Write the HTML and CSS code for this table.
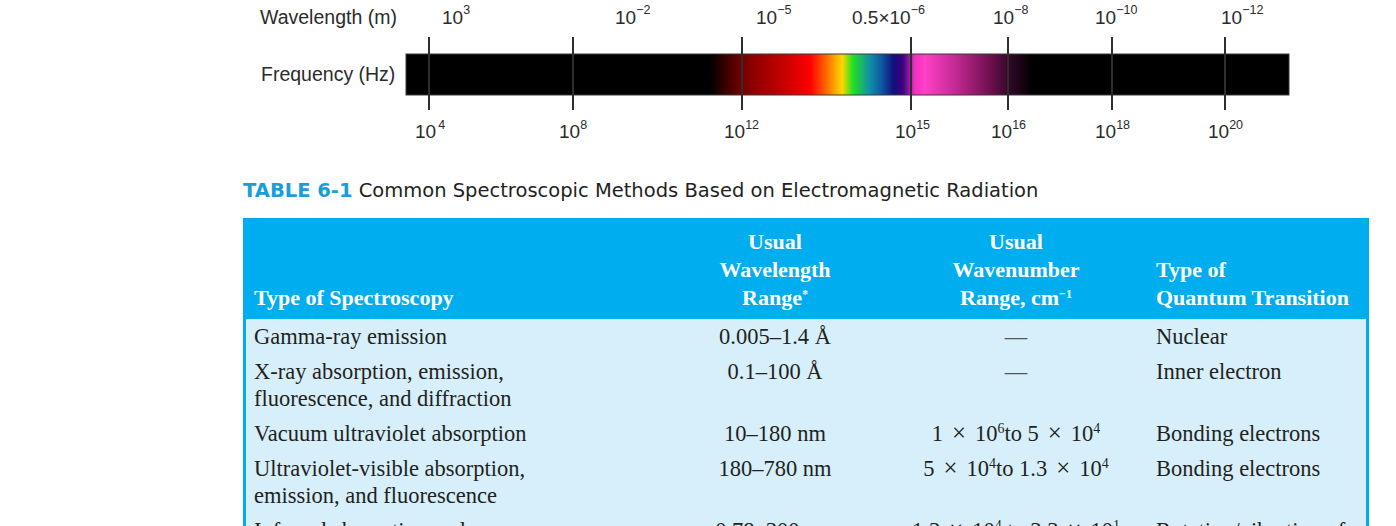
FILE: index.html
```html
<!DOCTYPE html>
<html lang="en">
<head>
<meta charset="utf-8">
<title>Common Spectroscopic Methods</title>
<link rel="stylesheet" href="styles.css">
</head>
<body>
<svg class="spectrum" width="1396" height="150" viewBox="0 0 1396 150">
  <defs>
    <linearGradient id="spec" x1="0" y1="0" x2="1" y2="0">
      <stop offset="0" stop-color="#000"/>
      <stop offset="0.344" stop-color="#000"/>
      <stop offset="0.382" stop-color="#7a0000"/>
      <stop offset="0.424" stop-color="#c00000"/>
      <stop offset="0.458" stop-color="#ff0000"/>
      <stop offset="0.472" stop-color="#ff5000"/>
      <stop offset="0.494" stop-color="#ffd800"/>
      <stop offset="0.506" stop-color="#22e022"/>
      <stop offset="0.525" stop-color="#1090a8"/>
      <stop offset="0.540" stop-color="#1050a0"/>
      <stop offset="0.552" stop-color="#10107a"/>
      <stop offset="0.563" stop-color="#400080"/>
      <stop offset="0.571" stop-color="#a020a0"/>
      <stop offset="0.576" stop-color="#f030c0"/>
      <stop offset="0.588" stop-color="#ff40c8"/>
      <stop offset="0.624" stop-color="#c02890"/>
      <stop offset="0.661" stop-color="#701050"/>
      <stop offset="0.684" stop-color="#300828"/>
      <stop offset="0.710" stop-color="#000"/>
      <stop offset="1" stop-color="#000"/>
    </linearGradient>
  </defs>
  <text class="axis-title" x="260" y="24">Wavelength (m)</text>
  <text class="axis-title" x="261" y="81">Frequency (Hz)</text>
  <rect x="406" y="54" width="883" height="41" fill="url(#spec)" stroke="#3a3a3a" stroke-width="1"/>
  <path class="tick" d="M429 37V110M573 37V110M742 37V110M911 37V110M1008 37V110M1112 37V110M1225 37V110"/>

  <text class="num" x="442" y="24">10<tspan class="sup" dy="-10">3</tspan></text>
  <text class="num" x="615" y="24">10<tspan class="sup" dy="-10">−2</tspan></text>
  <text class="num" x="756" y="24">10<tspan class="sup" dy="-10">−5</tspan></text>
  <text class="num" x="852" y="24">0.5×10<tspan class="sup" dy="-10">−6</tspan></text>
  <text class="num" x="993" y="24">10<tspan class="sup" dy="-10">−8</tspan></text>
  <text class="num" x="1095" y="24">10<tspan class="sup" dy="-10">−10</tspan></text>
  <text class="num" x="1221" y="24">10<tspan class="sup" dy="-10">−12</tspan></text>

  <text class="num" x="415" y="138">10<tspan class="sup" dy="-9" dx="2">4</tspan></text>
  <text class="num" x="559" y="138">10<tspan class="sup" dy="-9">8</tspan></text>
  <text class="num" x="724" y="138">10<tspan class="sup" dy="-9">12</tspan></text>
  <text class="num" x="895" y="138">10<tspan class="sup" dy="-9">15</tspan></text>
  <text class="num" x="991" y="138">10<tspan class="sup" dy="-9">16</tspan></text>
  <text class="num" x="1095" y="138">10<tspan class="sup" dy="-9">18</tspan></text>
  <text class="num" x="1208" y="138">10<tspan class="sup" dy="-9">20</tspan></text>
</svg>

<section class="table-block">
  <p class="caption"><span class="caption-label">TABLE 6-1</span> Common Spectroscopic Methods Based on Electromagnetic Radiation</p>
  <div class="table-frame">
    <table class="methods">
      <colgroup>
        <col class="col-type">
        <col class="col-wl">
        <col class="col-wn">
        <col class="col-qt">
      </colgroup>
      <thead>
        <tr>
          <th class="left first">Type of Spectroscopy</th>
          <th>Usual<br>Wavelength<br>Range<sup>*</sup></th>
          <th>Usual<br>Wavenumber<br>Range, cm<sup>−1</sup></th>
          <th class="left last">Type of<br>Quantum Transition</th>
        </tr>
      </thead>
      <tbody>
        <tr>
          <td class="first">Gamma-ray emission</td>
          <td class="mid">0.005–1.4 Å</td>
          <td class="mid"><span class="dash">—</span></td>
          <td class="last">Nuclear</td>
        </tr>
        <tr>
          <td class="first">X-ray absorption, emission,<br>fluorescence, and diffraction</td>
          <td class="mid">0.1–100 Å</td>
          <td class="mid"><span class="dash">—</span></td>
          <td class="last">Inner electron</td>
        </tr>
        <tr>
          <td class="first">Vacuum ultraviolet absorption</td>
          <td class="mid">10–180 nm</td>
          <td class="mid">1<span class="times">×</span>10<sup>6</sup>to 5<span class="times">×</span>10<sup>4</sup></td>
          <td class="last">Bonding electrons</td>
        </tr>
        <tr>
          <td class="first">Ultraviolet-visible absorption,<br>emission, and fluorescence</td>
          <td class="mid">180–780 nm</td>
          <td class="mid">5<span class="times">×</span>10<sup>4</sup>to 1.3<span class="times">×</span>10<sup>4</sup></td>
          <td class="last">Bonding electrons</td>
        </tr>
        <tr>
          <td class="first">Infrared absorption and<br>Raman scattering</td>
          <td class="mid">0.78–300 μm</td>
          <td class="mid">1.3<span class="times">×</span>10<sup>4</sup> to 3.3<span class="times">×</span>10<sup>1</sup></td>
          <td class="last">Rotation/vibration of<br>molecules</td>
        </tr>
      </tbody>
    </table>
  </div>
</section>
</body>
</html>
```

FILE: styles.css
```css
html, body {
  margin: 0;
  padding: 0;
  background: #ffffff;
  overflow: hidden;
}

body {
  width: 1396px;
  font-family: "Liberation Serif", "Times New Roman", serif;
}

.spectrum {
  display: block;
}

.spectrum text {
  font-family: "Liberation Sans", Arial, sans-serif;
  fill: #2b2b2b;
}

.axis-title {
  font-size: 19.5px;
}

.num {
  font-size: 19px;
}

.sup {
  font-size: 12.5px;
}

.tick {
  stroke: #2e2e2e;
  stroke-width: 2;
  fill: none;
}

.table-block {
  padding-left: 243px;
}

.caption {
  margin: 29px 0 15px;
  font-family: "DejaVu Sans", sans-serif;
  font-size: 19.5px;
  line-height: 24px;
  color: #231f20;
  white-space: nowrap;
}

.caption-label {
  font-weight: bold;
  color: #1b9dd9;
}

.table-frame {
  width: 1120px;
  padding: 0 3px;
  background: #00adef;
}

.methods {
  width: 1120px;
  table-layout: fixed;
  border-collapse: collapse;
  border-spacing: 0;
}

.col-type { width: 418px; }
.col-wl { width: 222px; }
.col-wn { width: 260px; }
.col-qt { width: 220px; }

.methods th {
  padding: 10px 0 7px;
  font-size: 22px;
  font-weight: bold;
  line-height: 28px;
  color: #ffffff;
  text-align: center;
  vertical-align: bottom;
  white-space: nowrap;
}

.methods th.left {
  text-align: left;
}

.methods .first {
  padding-left: 8px;
}

.methods .last {
  padding-left: 10px;
}

.methods td {
  padding-top: 4px;
  padding-bottom: 4px;
  font-size: 22.5px;
  line-height: 27px;
  color: #231f20;
  background: #d6effb;
  vertical-align: top;
  white-space: nowrap;
}

.methods td.mid {
  text-align: center;
}

.methods .times {
  display: inline-block;
  margin: 0 9px;
  font-size: 1.1em;
  line-height: 0;
}

.methods sup {
  font-size: 0.62em;
  line-height: 0;
  vertical-align: 0.6em;
}

.methods th sup {
  font-size: 0.55em;
}

.dash {
  color: #555555;
}
```
